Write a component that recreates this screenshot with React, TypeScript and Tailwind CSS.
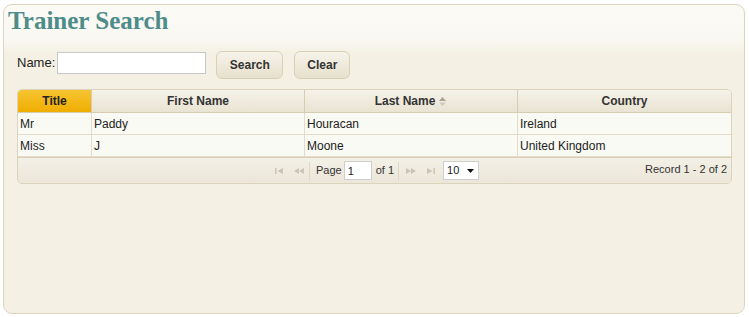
import React from "react";

const F = { fontFamily: '"Liberation Sans", Arial, sans-serif' };

function PagerIcon({ kind }: { kind: "first" | "prev" | "next" | "last" }) {
  const c = "#c9c4b6";
  return (
    <svg width="12" height="8" viewBox="0 0 12 8">
      {kind === "first" && (
        <g fill={c}>
          <rect x="2" y="1" width="1.5" height="6" />
          <path d="M10 1 L4.5 4 L10 7 Z" />
        </g>
      )}
      {kind === "prev" && (
        <g fill={c}>
          <path d="M6 1 L1 4 L6 7 Z" />
          <path d="M11 1 L6 4 L11 7 Z" />
        </g>
      )}
      {kind === "next" && (
        <g fill={c}>
          <path d="M1 1 L6 4 L1 7 Z" />
          <path d="M6 1 L11 4 L6 7 Z" />
        </g>
      )}
      {kind === "last" && (
        <g fill={c}>
          <path d="M2 1 L7.5 4 L2 7 Z" />
          <rect x="8.5" y="1" width="1.5" height="6" />
        </g>
      )}
    </svg>
  );
}

export default function App() {
  const rows = [
    ["Mr", "Paddy", "Houracan", "Ireland"],
    ["Miss", "J", "Moone", "United Kingdom"],
  ];
  return (
    <div className="w-[749px] h-[317px] bg-white pt-[4px] pl-[3px]" style={F}>
      <div className="w-[742px] h-[310px] rounded-[9px] border border-[#ddd4bc] bg-[linear-gradient(#fbfaf5_0px,#f9f8f1_36px,#f4f1e4_48px,#f4f1e4)]">
        <div
          className="pl-[4px] pt-[1px] h-[34px] text-[25px] font-bold text-[#4e8c8a] leading-[30px]"
          style={{ fontFamily: '"Liberation Serif", "Times New Roman", serif' }}
        >
          Trainer Search
        </div>
        <div className="flex items-start mt-[12px] pl-[13px] h-[30px]">
          <div className="h-[23px] flex items-center text-[13px] text-[#222]">Name:</div>
          <input className="mt-[1px] ml-[2px] w-[149px] h-[22px] bg-white border border-[#c8c8c8] outline-none" />
          <button className="ml-[10px] w-[67px] h-[28px] rounded-[6px] border border-[#d9cfb4] bg-[linear-gradient(#f6f3ea,#e7e0cd)] text-[12px] font-bold text-[#333]">
            Search
          </button>
          <button className="ml-[11px] w-[56px] h-[28px] rounded-[6px] border border-[#d9cfb4] bg-[linear-gradient(#f6f3ea,#e7e0cd)] text-[12px] font-bold text-[#333]">
            Clear
          </button>
        </div>
        <div className="mt-[8px] ml-[13px] w-[715px] rounded-[5px] border border-[#dcd3bd] overflow-hidden text-[12px] text-[#222]">
          <div className="flex h-[23px] border-b border-[#d6ccb2] font-bold text-[#333] bg-[linear-gradient(#f5f2e9,#e9e3d2)]">
            <div className="w-[74px] flex items-center justify-center bg-[linear-gradient(#f6c532,#f0ad00)] text-[#222] border-r border-[#d6ccb2]">
              Title
            </div>
            <div className="w-[213px] flex items-center justify-center border-r border-[#d6ccb2]">First Name</div>
            <div className="w-[213px] flex items-center justify-center border-r border-[#d6ccb2]">
              Last Name
              <svg width="9" height="11" viewBox="0 0 9 11" className="ml-[3px]">
                <path d="M4.5 1 L8 5 L1 5 Z" fill="#a8a394" />
                <path d="M4.5 10 L8 6.5 L1 6.5 Z" fill="#cfcabd" />
              </svg>
            </div>
            <div className="flex-1 flex items-center justify-center">Country</div>
          </div>
          {rows.map((r, i) => (
            <div key={i} className="flex h-[22px] bg-[#fafaf4] border-b border-[#e4dcc8]">
              <div className="w-[74px] pl-[2px] flex items-center border-r border-[#e4dcc8]">{r[0]}</div>
              <div className="w-[213px] pl-[2px] flex items-center border-r border-[#e4dcc8]">{r[1]}</div>
              <div className="w-[213px] pl-[2px] flex items-center border-r border-[#e4dcc8]">{r[2]}</div>
              <div className="flex-1 pl-[2px] flex items-center">{r[3]}</div>
            </div>
          ))}
          <div className="relative h-[26px] border-t border-[#d8cfb8] bg-[linear-gradient(#f3f0e6,#ebe6d8)] flex items-center text-[11px]">
            <div className="flex items-center ml-[255px] gap-[8px]">
              <PagerIcon kind="first" />
              <PagerIcon kind="prev" />
            </div>
            <div className="ml-[4px] w-[1px] h-[18px] bg-[#dcd6c6]" />
            <span className="ml-[6px] text-[#333]">Page</span>
            <input
              defaultValue="1"
              className="ml-[2px] w-[28px] h-[19px] bg-white border border-[#cfcfcf] text-[11px] pl-[3px] outline-none"
            />
            <span className="ml-[4px] text-[#333]">of 1</span>
            <div className="ml-[4px] w-[1px] h-[18px] bg-[#dcd6c6]" />
            <div className="flex items-center ml-[6px] gap-[8px]">
              <PagerIcon kind="next" />
              <PagerIcon kind="last" />
            </div>
            <div className="ml-[6px] w-[36px] h-[19px] bg-white border border-[#cfcfcf] flex items-center pl-[3px] text-[11px] text-[#222] justify-between pr-[4px]">
              <span>10</span>
              <svg width="7" height="4" viewBox="0 0 7 4">
                <path d="M0 0 L7 0 L3.5 4 Z" fill="#111" />
              </svg>
            </div>
            <span className="absolute right-[4px] top-[3px] text-[#333]">Record 1 - 2 of 2</span>
          </div>
        </div>
      </div>
    </div>
  );
}
